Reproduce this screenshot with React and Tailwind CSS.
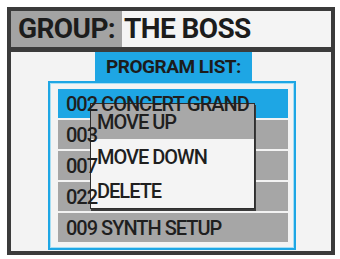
const font = {
  fontFamily: "Roboto, 'Liberation Sans', sans-serif",
};

const rows = [
  { id: "002", name: "CONCERT GRAND", selected: true },
  { id: "003", name: "" },
  { id: "007", name: "" },
  { id: "022", name: "" },
  { id: "009", name: "SYNTH SETUP" },
];

const App = () => {
  return (
    <div className="w-[340px] h-[259px] bg-white pt-[7px] pl-[7px]" style={font}>
      <div className="w-[328px] h-[248px] border-4 border-[#3b3b3b] flex flex-col">
        <div className="h-[41px] flex border-b-[5px] border-[#3b3b3b] text-[28px] font-bold leading-none text-[#1c1c1c] tracking-[-0.6px]">
          <div className="w-[111px] bg-[#a3a3a3] flex items-center pl-[7px]">GROUP:</div>
          <div className="flex-1 bg-[#f4f4f4] flex items-center pl-[2px]">THE BOSS</div>
        </div>
        <div className="flex-1 bg-[#f3f3f3] flex flex-col">
          <div className="ml-[84px] w-[157px] h-[29px] bg-[#1ea6e4] flex items-center justify-center text-[19px] font-bold text-[#1c1c1c] leading-none tracking-[-0.5px]">
            PROGRAM LIST:
          </div>
          <div className="relative ml-[37px] w-[248px] h-[169px] border-2 border-[#1ea6e4] shadow-[inset_0_0_0_1px_#a6def4] pt-[6px] pl-[8px] pr-[6px] flex flex-col gap-[2px]">
            {rows.map((r) => (
              <div
                key={r.id}
                className={`h-[29px] flex items-center pl-[8px] text-[20px] font-medium leading-none tracking-[-1px] text-[#1f1f1f] ${
                  r.selected ? "bg-[#1ea6e4]" : "bg-[#a6a6a6]"
                }`}
              >
                <span className="relative z-20">
                  {r.id} {r.name}
                </span>
              </div>
            ))}
            <div className="absolute z-10 left-[40px] top-[20px] w-[165px] h-[106px] border border-[#2e2e2e] shadow-[1px_2px_0_#3a3a3a] flex flex-col text-[20px] font-medium leading-none tracking-[-1px] text-[#1f1f1f]">
              <div className="h-[35px] bg-[#a8a8a8] flex items-center pl-[6px]">MOVE UP</div>
              <div className="h-[35px] bg-[#f4f4f4] flex items-center pl-[6px]">MOVE DOWN</div>
              <div className="flex-1 bg-[#f4f4f4] flex items-center pl-[6px]">DELETE</div>
            </div>
          </div>
        </div>
      </div>
    </div>
  );
};

export default App;
